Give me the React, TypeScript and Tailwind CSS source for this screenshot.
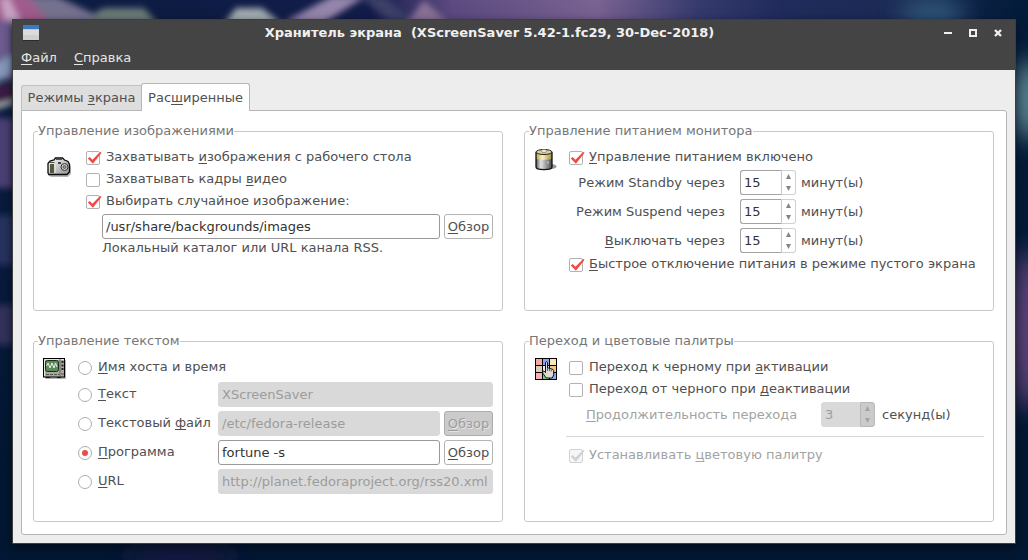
import type { ReactNode } from 'react';

/** Mnemonic letter of a label. */
function M({ children }: { children: ReactNode }) {
  return (
    <span className="underline decoration-1 underline-offset-2 [text-decoration-skip-ink:none]">
      {children}
    </span>
  );
}

function Wallpaper() {
  return (
    <svg
      className="absolute inset-0 h-full w-full"
      viewBox="0 0 1028 560"
      preserveAspectRatio="none"
      aria-hidden="true"
    >
      <defs>
        <filter id="soft" x="-30%" y="-30%" width="160%" height="160%">
          <feGaussianBlur stdDeviation="3" />
        </filter>
        <filter id="softer" x="-50%" y="-50%" width="200%" height="200%">
          <feGaussianBlur stdDeviation="12" />
        </filter>
        <linearGradient id="sky" x1="0" y1="0" x2="1" y2="0">
          <stop offset="0" stopColor="#0a1c40" />
          <stop offset="0.36" stopColor="#131c4a" />
          <stop offset="0.44" stopColor="#5c4a80" />
          <stop offset="0.58" stopColor="#7a6393" />
          <stop offset="0.68" stopColor="#353a6e" />
          <stop offset="0.76" stopColor="#202c5c" />
          <stop offset="0.86" stopColor="#1c2a56" />
          <stop offset="1" stopColor="#021b3a" />
        </linearGradient>
        <linearGradient id="depth" x1="0" y1="0" x2="0" y2="1">
          <stop offset="0" stopColor="#021732" stopOpacity="0" />
          <stop offset="0.5" stopColor="#021732" stopOpacity="0.3" />
          <stop offset="0.85" stopColor="#021732" />
          <stop offset="1" stopColor="#021732" />
        </linearGradient>
      </defs>
      <rect width="1028" height="560" fill="url(#sky)" />
      <rect width="1028" height="560" fill="url(#depth)" />
      <g filter="url(#soft)">
        <path d="M-10 -10h34l46 34H-10z" fill="#a05c8c" />
        <path d="M0 0l8 -4 14 28H6z" fill="#c9a3c4" />
        <path d="M28 -4h28l60 28H50z" fill="#74718f" />
        <path d="M96 12l8-4h40l14 16H90z" fill="#6c7a78" />
        <path d="M224 24l12-16h26l20 16z" fill="#a3adb0" />
        <path d="M284 22l48-26h34l-44 28z" fill="#9585ac" />
        <path d="M360 -4h24l30 26h-24z" fill="#3a3f68" />
        <path d="M406 24l18-24 26 24z" fill="#8a7196" />
        <path d="M-10 20h24v60h-24z" fill="#6c5c90" />
        <path d="M-10 66l24-12v18l-24 14z" fill="#8498ba" />
        <path d="M-10 84h24v20h-24z" fill="#3b1c44" />
        <path d="M-10 106l24-6v4l-24 7z" fill="#b4bebc" />
        <path d="M-10 118h24v70h-24z" fill="#4c3f74" />
        <path d="M-10 215h24v50h-24z" fill="#27305f" />
        <path d="M-10 305h24v40h-24z" fill="#33305c" />
      </g>
      <g filter="url(#softer)">
        <ellipse cx="932" cy="14" rx="34" ry="16" fill="#31597a" />
        <ellipse cx="1028" cy="100" rx="18" ry="40" fill="#5b8590" />
        <ellipse cx="1028" cy="330" rx="20" ry="80" fill="#5c4278" />
        <ellipse cx="180" cy="556" rx="60" ry="8" fill="#221f4c" />
      </g>
    </svg>
  );
}

function CameraIcon() {
  return (
    <svg width="24" height="30" viewBox="0 0 24 30" aria-hidden="true">
      <defs>
        <linearGradient id="cam" x1="0" y1="0" x2="1" y2="1">
          <stop offset="0" stopColor="#fff" />
          <stop offset="1" stopColor="#8f8f8f" />
        </linearGradient>
      </defs>
      <path d="M3 15h19l2 4v7l-3 3H4l-3-2z" fill="#000" opacity=".28" />
      <path d="M1 15.500l2-2.500 4-1 1.500-2h7l2 2 3.500 1.500 1.500 3v7.500l-2.500 2.500H2L1 25z" fill="url(#cam)" stroke="#0a0a0a" strokeWidth="1.300" />
      <path d="M3 16h4v9H3z" fill="#57573f" />
      <path d="M2.500 14.500h5M9 11.500h6" stroke="#555" />
      <path d="M8 16v9" stroke="#e8e8e8" />
      <rect x="11" y="14" width="3" height="2" fill="#444" />
      <circle cx="17.500" cy="19" r="3.500" fill="#d2d2d2" stroke="#333" />
      <circle cx="17.500" cy="19" r="1.500" fill="#999" stroke="#444" strokeWidth=".8" />
    </svg>
  );
}

function BatteryIcon() {
  return (
    <svg width="22" height="24" viewBox="0 0 22 24" aria-hidden="true">
      <defs>
        <linearGradient id="cell" x1="0" y1="0" x2="1" y2="0">
          <stop offset="0" stopColor="#555" />
          <stop offset=".3" stopColor="#e4e4e4" />
          <stop offset="1" stopColor="#4a4a4a" />
        </linearGradient>
        <linearGradient id="gold" x1="0" y1="0" x2="1" y2="0">
          <stop offset="0" stopColor="#b7a25a" />
          <stop offset=".4" stopColor="#fbf2c0" />
          <stop offset="1" stopColor="#a08c48" />
        </linearGradient>
      </defs>
      <ellipse cx="16" cy="18.500" rx="5.500" ry="2.500" fill="#000" opacity=".4" />
      <path d="M1 4v15c0 3.500 16 3.500 16 0V4z" fill="url(#cell)" />
      <path d="M1 4v6c0 2.500 16 2.500 16 0V4z" fill="url(#gold)" />
      <path d="M1 4v15c0 3.500 16 3.500 16 0V4" fill="none" stroke="#111" strokeWidth="1.300" />
      <ellipse cx="9" cy="4" rx="8" ry="2.500" fill="#ddd09a" stroke="#222" />
      <ellipse cx="9" cy="3" rx="3" ry="1.500" fill="#f6f0d0" stroke="#777" strokeWidth=".7" />
      <path d="M13 13v3" stroke="#ccc" />
    </svg>
  );
}

function MonitorIcon() {
  return (
    <svg width="24" height="22" viewBox="0 0 24 22" aria-hidden="true">
      <rect x="2" y="2" width="21" height="19" rx="1" fill="#000" opacity=".3" />
      <rect x=".5" y=".5" width="21" height="18.500" fill="#a9a9a2" stroke="#000" />
      <path d="M1.500 18V1.500H21" fill="none" stroke="#e6e6e0" />
      <rect x="2.500" y="2.500" width="13" height="11" rx="2" fill="#5d8a5a" stroke="#1c2b1c" />
      <path d="M3.500 8l1.500-3 2 5 2-5 2 5 1.500-5 1.500 4" fill="none" stroke="#e9f3e6" />
      <path d="M17 1v17" stroke="#666" />
      <path d="M19.500 3v10" stroke="#222" strokeWidth="2" strokeDasharray="2 1.500" />
      <path d="M3 16.500h13M18 16h3" stroke="#555" strokeDasharray="3 1" />
      <path d="M3 19.500h4M14 19.500h4" stroke="#111" />
    </svg>
  );
}

function PaletteIcon() {
  return (
    <svg width="22" height="22" viewBox="0 0 22 22" aria-hidden="true">
      <rect width="22" height="22" fill="#000" />
      <rect x="1" y="1" width="6" height="6" fill="#f3a9a4" />
      <rect x="8" y="1" width="6" height="6" fill="#8fa2f2" />
      <rect x="15" y="1" width="6" height="6" fill="#f8e9b4" />
      <rect x="1" y="8" width="6" height="6" fill="#dccdb6" />
      <rect x="8" y="8" width="6" height="6" fill="#e9e9f0" />
      <rect x="15" y="8" width="6" height="6" fill="#f5c48c" />
      <rect x="1" y="15" width="6" height="6" fill="#f4b3bb" />
      <rect x="8" y="15" width="6" height="6" fill="#7cc878" />
      <rect x="15" y="15" width="6" height="6" fill="#93a4f4" />
      <path d="M10.500 4.500c0-1 2-1 2 0V10h1.300l1.200.6 1.200.2 1.800.7.700 1v4.500l-1.500 3h-6L8 15.500l-.5-2.500 1.500.2 1.500 1.300z" fill="#dedcd2" stroke="#111" />
      <path d="M12.500 10v3M14.500 11v2M16.300 11.500v2" stroke="#444" strokeWidth=".8" />
    </svg>
  );
}

function Group({ title, icon, wide, children }: { title: string; icon: ReactNode; wide?: boolean; children: ReactNode }) {
  return (
    <fieldset className="min-w-0 rounded-[3px] border border-[#c8c8c8] pb-6">
      <legend className="ml-1 h-[18px] leading-[18px] text-[#777]">{title}</legend>
      <div className="flex pr-[9px]">
        <div className={wide ? 'flex w-[52px] shrink-0 justify-center pt-2 pr-0.5' : 'flex w-11 shrink-0 justify-center pt-2 pr-0.5'}>
          {icon}
        </div>
        <div className="min-w-0 grow pt-[7px]">{children}</div>
      </div>
    </fieldset>
  );
}

function Check({ children, checked, disabled }: { children: ReactNode; checked?: boolean; disabled?: boolean }) {
  return (
    <label className={disabled ? 'flex h-[22px] items-center gap-1.5 text-[#a3a3a3]' : 'flex h-[22px] items-center gap-1.5'}>
      <span className="relative size-3.5 shrink-0">
        <input
          type="checkbox"
          defaultChecked={checked}
          disabled={disabled}
          className="peer block size-3.5 appearance-none rounded-[2px] border border-[#b2b2b2] bg-white disabled:border-[#d2d2d2] disabled:bg-[#f6f6f6]"
        />
        <svg
          className="pointer-events-none absolute top-0 left-0 hidden overflow-visible text-[#ef4b45] peer-checked:block peer-disabled:text-[#d0d0d0]"
          width="16"
          height="14"
          viewBox="0 0 16 14"
          aria-hidden="true"
        >
          <path d="M1.800 7.600l1.900-1.500 2.700 2.700L14.100 1l1.500.8-8.700 11z" fill="currentColor" />
        </svg>
      </span>
      <span className="pb-0.5 whitespace-nowrap">{children}</span>
    </label>
  );
}

function Radio({ children, checked }: { children: ReactNode; checked?: boolean }) {
  return (
    <label className="flex h-[22px] w-[140px] shrink-0 items-center gap-1.5 whitespace-nowrap">
      <span className="relative size-3.5 shrink-0">
        <input
          type="radio"
          name="text-source"
          defaultChecked={checked}
          className="peer block size-3.5 appearance-none rounded-full border border-[#adadad] bg-white"
        />
        <span className="pointer-events-none absolute inset-1 hidden rounded-full bg-[#ef4b45] peer-checked:block" />
      </span>
      <span className="pb-0.5">{children}</span>
    </label>
  );
}

function Field({ label, value, disabled }: { label: string; value: string; disabled?: boolean }) {
  return (
    <input
      type="text"
      aria-label={label}
      defaultValue={value}
      disabled={disabled}
      className="h-[25px] min-w-0 grow rounded-[3px] border border-[#999] bg-white px-[3px] text-[#333] disabled:border-[#d9d9d9] disabled:bg-[#d9d9d9] disabled:text-[#9c9c9c]"
    />
  );
}

function Browse({ disabled }: { disabled?: boolean }) {
  return (
    <button
      type="button"
      disabled={disabled}
      className="h-[25px] w-[49px] shrink-0 rounded-[3px] border border-[#b4b4b4] bg-white text-center leading-[22px] disabled:border-[#adadad] disabled:bg-[#cbcbcb] disabled:text-[#9d9d9d] disabled:text-shadow-[1px_1px_0_#e4e4e4]"
    >
      <M>О</M>бзор
    </button>
  );
}

function Arrow({ up }: { up?: boolean }) {
  return (
    <svg width="5" height="5" viewBox="0 0 5 5" aria-hidden="true">
      <path d={up ? 'M2.5 0L5 5H0z' : 'M0 0h5L2.5 5z'} fill="currentColor" />
    </svg>
  );
}

function Spin({ id, value, disabled }: { id: string; value: number; disabled?: boolean }) {
  return (
    <span className={disabled ? 'flex h-[25px] w-[54px] shrink-0' : 'flex h-[25px] w-14 shrink-0'}>
      <input
        id={id}
        type="number"
        defaultValue={value}
        disabled={disabled}
        className="w-0 min-w-0 grow appearance-none rounded-l-[3px] border border-[#a3a3a3] border-r-[#c8c8c8] bg-white px-[3px] text-[#333] [appearance:textfield] disabled:border-[#d9d9d9] disabled:bg-[#d9d9d9] disabled:text-[#9c9c9c]"
      />
      <span
        className={
          disabled
            ? 'flex w-[15px] shrink-0 flex-col rounded-r-[3px] border border-[#b8b8b8] bg-[#cbcbcb] text-[#a3a3a3]'
            : 'flex w-[14px] shrink-0 flex-col rounded-r-[3px] border border-l-0 border-[#d0d0d0] bg-white text-[#848484]'
        }
      >
        <button type="button" disabled={disabled} aria-label="Увеличить" className="flex grow items-center justify-center">
          <Arrow up />
        </button>
        <button type="button" disabled={disabled} aria-label="Уменьшить" className="flex grow items-center justify-center">
          <Arrow />
        </button>
      </span>
    </span>
  );
}

function PowerRow({ id, children }: { id: string; children: ReactNode }) {
  return (
    <div className="flex items-center">
      <label htmlFor={id} className="mr-[15px] w-[156px] text-right whitespace-nowrap">
        {children}
      </label>
      <Spin id={id} value={15} />
      <span className="ml-[5px]">минут(ы)</span>
    </div>
  );
}

const windowButton = 'flex w-[25px] items-center justify-center';

export default function App() {
  return (
    <div className="relative min-h-screen overflow-hidden bg-[#021732] px-3 pt-[19px] pb-4 font-['DejaVu_Sans',sans-serif] text-[13px] leading-[18px] text-[#505050]">
      <Wallpaper />
      <main className="relative border border-[#3e3e3e] bg-[#ededed] shadow-[0_3px_10px_rgba(0,0,0,0.5)]">
        <header className="bg-[#444] text-[#e6e6e6]">
          <div className="flex h-[26px] pr-[5px] pl-2.5">
            <svg className="mt-[5px] mr-[5px] shrink-0" width="16" height="16" viewBox="0 0 16 16" aria-hidden="true">
              <rect y="1" width="16" height="15" fill="#2c2c2c" />
              <rect width="16" height="15" fill="#dcdcdc" />
              <rect y="10" width="16" height="5" fill="#cfcfcf" />
              <rect width="16" height="5" fill="#3f78c2" />
              <rect y="4" width="16" height="1" fill="#b8cbe4" />
            </svg>
            <h1 className="grow text-center leading-[25px] font-bold whitespace-pre text-[#f0f0f0]">
              Хранитель экрана  (XScreenSaver 5.42-1.fc29, 30-Dec-2018)
            </h1>
            <button type="button" aria-label="Свернуть" className={windowButton}>
              <svg width="8" height="8" aria-hidden="true"><path d="M0 3h8v2H0z" fill="#eee" /></svg>
            </button>
            <button type="button" aria-label="Развернуть" className={windowButton}>
              <svg width="8" height="8" aria-hidden="true"><path d="M1 1h6v6H1z" fill="none" stroke="#eee" strokeWidth="2" /></svg>
            </button>
            <button type="button" aria-label="Закрыть" className={windowButton}>
              <svg width="8" height="8" aria-hidden="true"><path d="M1 1l6 6M7 1L1 7" stroke="#eee" strokeWidth="2.400" /></svg>
            </button>
          </div>
          <nav className="flex h-6 items-center gap-[17px] pl-2">
            <button type="button"><M>Ф</M>айл</button>
            <button type="button"><M>С</M>правка</button>
          </nav>
        </header>

        <div className="px-2 pt-[13px] pb-2">
          <div role="tablist" className="relative z-10 -mb-px flex items-end">
            <button type="button" role="tab" aria-selected="false" className="mb-px h-[25px] w-[120px] rounded-tl-[3px] border border-r-0 border-b-0 border-[#c2c2c2] bg-[#dedede] text-center whitespace-nowrap">
              Режимы <M>э</M>крана
            </button>
            <button type="button" role="tab" aria-selected="true" className="h-7 w-[109px] rounded-t-[3px] border border-b-0 border-[#b6b6b6] bg-white text-center whitespace-nowrap">
              Рас<M>ш</M>иренные
            </button>
          </div>

          <div role="tabpanel" className="grid grid-cols-2 grid-rows-[minmax(189px,auto)_minmax(190px,auto)] gap-[21px] rounded-b-[3px] rounded-tr-[3px] border border-[#b6b6b6] bg-white pt-[11px] pr-3 pb-3 pl-[11px]">
            <Group title="Управление изображениями" wide icon={<CameraIcon />}>
              <Check checked>Захватывать <M>и</M>зображения с рабочего стола</Check>
              <Check>Захватывать кадры <M>в</M>идео</Check>
              <Check checked>Выбирать случайное изображение:</Check>
              <div className="mt-px ml-4 flex gap-1">
                <Field label="Каталог изображений" value="/usr/share/backgrounds/images" />
                <Browse />
              </div>
              <p className="ml-4 whitespace-nowrap">Локальный каталог или URL канала RSS.</p>
            </Group>

            <Group title="Управление питанием монитора" icon={<BatteryIcon />}>
              <Check checked><M>У</M>правление питанием включено</Check>
              <div className="my-px flex flex-col gap-1">
                <PowerRow id="standby">Режим Standby через</PowerRow>
                <PowerRow id="suspend">Режим Suspend через</PowerRow>
                <PowerRow id="off"><M>В</M>ыключать через</PowerRow>
              </div>
              <Check checked><M>Б</M>ыстрое отключение питания в режиме пустого экрана</Check>
            </Group>

            <Group title="Управление текстом" icon={<MonitorIcon />}>
              <Radio><M>И</M>мя хоста и время</Radio>
              <div className="mt-[3px] flex flex-col gap-1">
                <div className="flex items-center">
                  <Radio><M>Т</M>екст</Radio>
                  <Field label="Текст" value="XScreenSaver" disabled />
                </div>
                <div className="flex items-center">
                  <Radio>Текстовый <M>ф</M>айл</Radio>
                  <div className="flex min-w-0 grow gap-1">
                    <Field label="Текстовый файл" value="/etc/fedora-release" disabled />
                    <Browse disabled />
                  </div>
                </div>
                <div className="flex items-center">
                  <Radio checked><M>П</M>рограмма</Radio>
                  <div className="flex min-w-0 grow gap-1">
                    <Field label="Программа" value="fortune -s" />
                    <Browse />
                  </div>
                </div>
                <div className="flex items-center">
                  <Radio><M>U</M>RL</Radio>
                  <Field label="URL" value="http://planet.fedoraproject.org/rss20.xml" disabled />
                </div>
              </div>
            </Group>

            <Group title="Переход и цветовые палитры" icon={<PaletteIcon />}>
              <Check>Переход к черному при <M>а</M>ктивации</Check>
              <Check>Переход от черного при <M>д</M>еактивации</Check>
              <div className="mt-px flex items-center pl-[17px]">
                <label htmlFor="fade" className="w-[235px] whitespace-nowrap text-[#a3a3a3]">
                  <M>П</M>родолжительность перехода
                </label>
                <Spin id="fade" value={3} disabled />
                <span className="ml-[7px]">секунд(ы)</span>
              </div>
              <hr className="mt-[9px] mb-2 -ml-[3px] border-t border-[#d6d6d6]" />
              <Check checked disabled>Устанавливать <M>ц</M>ветовую палитру</Check>
            </Group>
          </div>
        </div>
      </main>
    </div>
  );
}
